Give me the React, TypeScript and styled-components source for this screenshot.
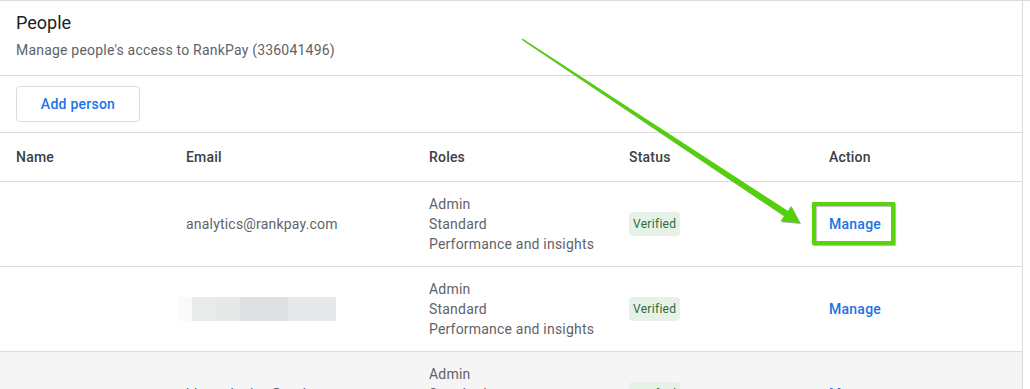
import React from 'react';
import styled, { createGlobalStyle } from 'styled-components';

const GlobalStyle = createGlobalStyle`
  html, body {
    margin: 0;
    padding: 0;
    background: #ffffff;
    overflow: hidden;
  }
  body {
    font-family: Roboto, "Noto Sans", Arial, sans-serif;
    letter-spacing: 0.2px;
    -webkit-font-smoothing: antialiased;
  }
`;

const Page = styled.div`
  position: relative;
  width: 1030px;
  height: 389px;
  border-top: 1px solid #dadce0;
  box-sizing: border-box;
  overflow: hidden;
`;

const Card = styled.section`
  width: 1023px;
  border-right: 1px solid #dadce0;
  box-sizing: border-box;
  min-height: 400px;
`;

const Header = styled.header`
  height: 74px;
  padding: 10px 16px 0;
  box-sizing: border-box;
`;

const Title = styled.h2`
  margin: 0;
  font-size: 18px;
  line-height: 24px;
  font-weight: 400;
  letter-spacing: 0;
  color: #202124;
`;

const Subtitle = styled.p`
  margin: 5px 0 0;
  font-size: 14px;
  line-height: 20px;
  color: #5f6368;
`;

const Toolbar = styled.div`
  display: flex;
  padding: 10px 16px;
  border-top: 1px solid #dadce0;
`;

const OutlineButton = styled.button`
  height: 36px;
  width: 124px;
  border: 1px solid #dadce0;
  border-radius: 4px;
  background: #fff;
  color: #1a73e8;
  font-family: inherit;
  font-size: 14px;
  font-weight: 500;
  letter-spacing: 0.25px;
  cursor: pointer;
`;

const Row = styled.div<{ $head?: boolean; $shaded?: boolean }>`
  display: grid;
  grid-template-columns: 170px 243px 200px 200px 1fr;
  align-items: center;
  padding-left: 16px;
  min-height: ${(p) => (p.$head ? '48px' : '84px')};
  border-top: 1px solid #dadce0;
  background: ${(p) => (p.$shaded ? '#f5f5f5' : 'transparent')};
  font-size: 14px;
  line-height: 20px;
  color: ${(p) => (p.$head ? '#3c4043' : '#5f6368')};
  font-weight: ${(p) => (p.$head ? 500 : 400)};
`;

const Cell = styled.div`
  display: flex;
  flex-direction: column;
  align-items: flex-start;
`;

const Chip = styled.span`
  padding: 4px 4px;
  font-size: 12px;
  line-height: 16px;
  letter-spacing: 0.3px;
  border-radius: 4px;
  background: #e6f2e8;
  color: #2b6b3a;
`;

const ManageLink = styled.a<{ $highlighted?: boolean }>`
  position: relative;
  color: #1a73e8;
  font-weight: 500;
  letter-spacing: 0.25px;
  text-decoration: none;
  cursor: pointer;

  ${(p) =>
    p.$highlighted &&
    `
    &::after {
      content: '';
      position: absolute;
      left: -17px;
      right: -14px;
      top: -12px;
      bottom: -11px;
      border: 4px solid #58d40c;
      border-radius: 1px;
      box-shadow: 1px 1px 1px rgba(0, 0, 0, 0.3), inset 1px 1px 1px rgba(0, 0, 0, 0.25);
    }
  `}
`;

const Blurred = styled.div`
  display: flex;
  height: 24px;
  margin-left: -8px;
`;

const BlurBlock = styled.span<{ $w: number; $c: string }>`
  width: ${(p) => p.$w}px;
  height: 100%;
  background: ${(p) => p.$c};
`;

const Annotation = styled.svg`
  position: absolute;
  left: 0;
  top: -1px;
  width: 1030px;
  height: 389px;
  pointer-events: none;
  filter: drop-shadow(1px 1px 0.6px rgba(0, 0, 0, 0.35));
`;

const roles = ['Admin', 'Standard', 'Performance and insights'];

const blur = [
  { w: 14, c: '#fafafa' },
  { w: 24, c: '#e9eaea' },
  { w: 24, c: '#e6e7e7' },
  { w: 48, c: '#dfe0e1' },
  { w: 48, c: '#e6e7e8' },
];

const Roles = () => (
  <Cell>
    {roles.map((r) => (
      <span key={r}>{r}</span>
    ))}
  </Cell>
);

const App: React.FC = () => {
  return (
    <>
      <GlobalStyle />
      <Page>
        <Card>
          <Header>
            <Title>People</Title>
            <Subtitle>Manage people's access to RankPay (336041496)</Subtitle>
          </Header>
          <Toolbar>
            <OutlineButton>Add person</OutlineButton>
          </Toolbar>

          <Row $head>
            <Cell>Name</Cell>
            <Cell>Email</Cell>
            <Cell>Roles</Cell>
            <Cell>Status</Cell>
            <Cell>Action</Cell>
          </Row>

          <Row>
            <Cell />
            <Cell>analytics@rankpay.com</Cell>
            <Roles />
            <Cell>
              <Chip>Verified</Chip>
            </Cell>
            <Cell>
              <ManageLink $highlighted>Manage</ManageLink>
            </Cell>
          </Row>

          <Row>
            <Cell />
            <Cell>
              <Blurred>
                {blur.map((b, i) => (
                  <BlurBlock key={i} $w={b.w} $c={b.c} />
                ))}
              </Blurred>
            </Cell>
            <Roles />
            <Cell>
              <Chip>Verified</Chip>
            </Cell>
            <Cell>
              <ManageLink>Manage</ManageLink>
            </Cell>
          </Row>

          <Row $shaded>
            <Cell />
            <Cell>bk.marketing@rankpay.com</Cell>
            <Roles />
            <Cell>
              <Chip>Verified</Chip>
            </Cell>
            <Cell>
              <ManageLink>Manage</ManageLink>
            </Cell>
          </Row>
        </Card>

        <Annotation viewBox="0 0 1030 389">
          <polygon
            fill="#52d10a"
            points="522.4,38.4 788,211 791,206 800,223 780.5,221.3 784,216 521.6,39.6"
          />
        </Annotation>
      </Page>
    </>
  );
};

export default App;
